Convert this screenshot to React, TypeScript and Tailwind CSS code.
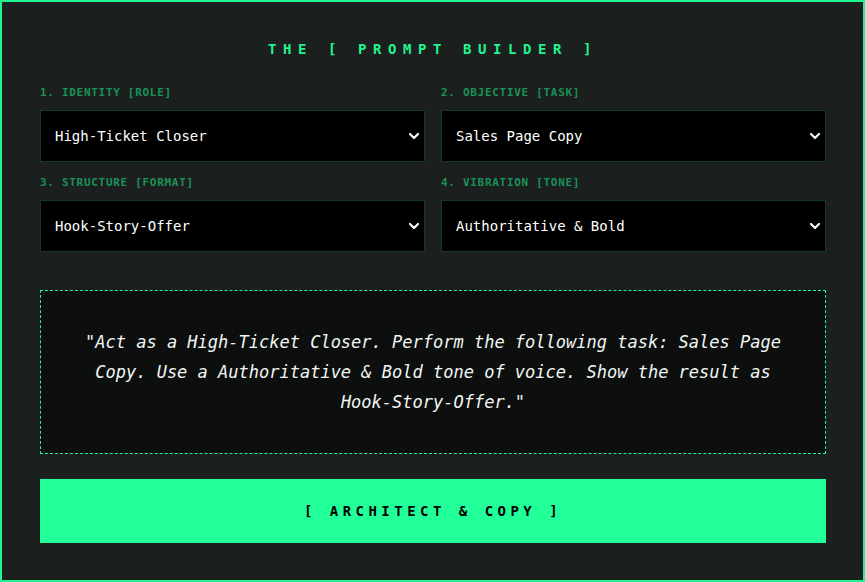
import { ChevronDown } from "lucide-react";

const fields = [
  { label: "1. IDENTITY [ROLE]", value: "High-Ticket Closer", options: ["High-Ticket Closer", "Copywriter", "Strategist"] },
  { label: "2. OBJECTIVE [TASK]", value: "Sales Page Copy", options: ["Sales Page Copy", "Email Sequence", "Ad Script"] },
  { label: "3. STRUCTURE [FORMAT]", value: "Hook-Story-Offer", options: ["Hook-Story-Offer", "PAS", "AIDA"] },
  { label: "4. VIBRATION [TONE]", value: "Authoritative & Bold", options: ["Authoritative & Bold", "Friendly", "Playful"] },
];

function Field({ label, value, options }: { label: string; value: string; options: string[] }) {
  return (
    <div className="flex flex-col">
      <label className="mb-[10px] h-[14px] text-[11px] font-bold leading-[14px] tracking-[0.7px] text-[#1a9258]">
        {label}
      </label>
      <div className="relative">
        <select
          defaultValue={value}
          className="h-[52px] w-full appearance-none rounded-none border border-[#0e3a26] bg-black pl-[14px] pr-10 text-[14px] text-white outline-none"
        >
          {options.map((o) => (
            <option key={o}>{o}</option>
          ))}
        </select>
        <ChevronDown
          size={16}
          strokeWidth={3.2}
          className="pointer-events-none absolute right-[3px] top-1/2 -translate-y-1/2 text-white"
        />
      </div>
    </div>
  );
}

export default function App() {
  return (
    <div className="h-[582px] w-[865px] border-2 border-[#20f592] bg-[#1b1f1e] pl-[38px] pr-[37px] pt-[37px] font-['DejaVu_Sans_Mono','Liberation_Mono',monospace]">
      <h1 className="mb-[27px] h-[20px] text-center text-[14px] font-bold leading-[20px] tracking-[0.47em] text-[#20f592]">
        THE [ PROMPT BUILDER ]
      </h1>

      <div className="grid grid-cols-2 gap-x-4 gap-y-[14px]">
        {fields.map((f) => (
          <Field key={f.label} {...f} />
        ))}
      </div>

      <div className="mt-[38px] flex h-[164px] items-center justify-center border border-dashed border-[#20f592] bg-[#0c0f0e] px-10">
        <p className="text-center text-[17px] italic leading-[30px] text-[#f2f6f4]">
          "Act as a High-Ticket Closer. Perform the following task: Sales Page Copy. Use a Authoritative &amp; Bold
          tone of voice. Show the result as Hook-Story-Offer."
        </p>
      </div>

      <button className="mt-[25px] flex h-[64px] w-full items-center justify-center bg-[#20ff98] text-[14px] font-bold tracking-[0.32em] text-black">
        [ ARCHITECT &amp; COPY ]
      </button>
    </div>
  );
}
